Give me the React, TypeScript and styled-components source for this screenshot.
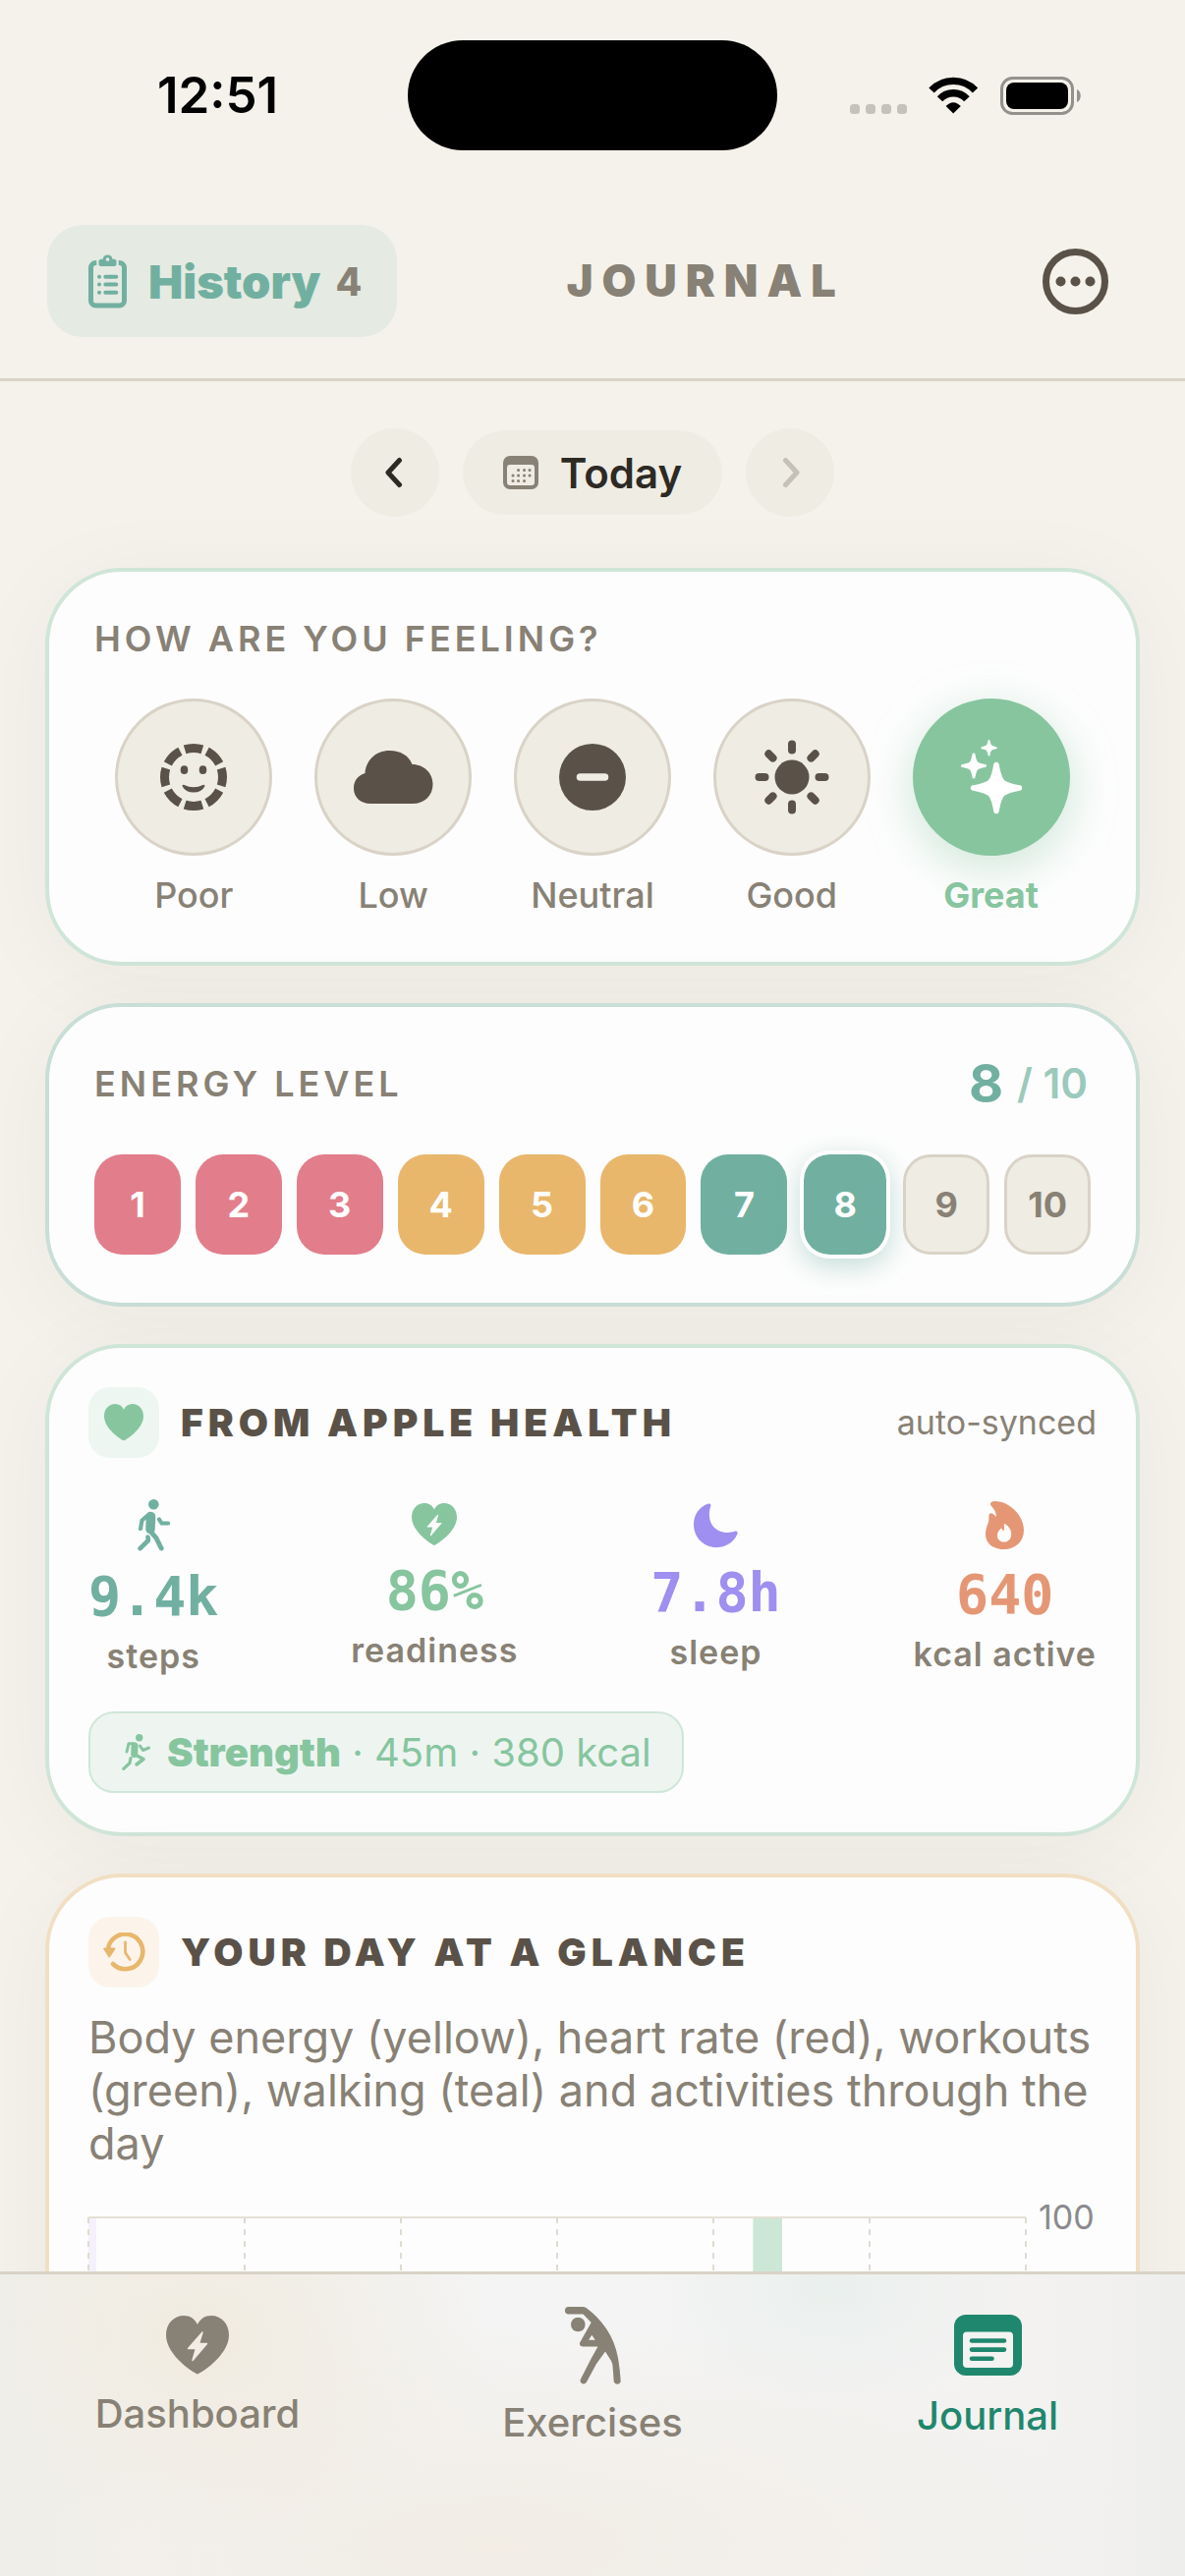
import React, { useState } from "react";
import styled, { createGlobalStyle, css } from "styled-components";

const color = {
  page: "#f5f2eb",
  card: "#fdfdfd",
  line: "#d9d3c7",
  fill: "#efece3",
  ink: "#2d2a24",
  strong: "#5a5248",
  muted: "#888175",
  green: "#87c59f",
  teal: "#71b0a0",
  amber: "#e8b76c",
  rose: "#e27d8b",
  violet: "#9f8ff0",
  orange: "#e59775",
  active: "#1f876d",
};

const GlobalStyle = createGlobalStyle`
  *, *::before, *::after { box-sizing: border-box; }
  body {
    margin: 0;
    background: ${color.page};
    font-family: Inter, "Liberation Sans", sans-serif;
    -webkit-font-smoothing: antialiased;
  }
  button { font: inherit; color: inherit; border: 0; padding: 0; background: none; cursor: pointer; }
  h1, h2, p, dl, dd, dt { margin: 0; font-weight: inherit; }
  svg { display: block; flex: none; }
`;

/* ---------- shell ---------- */

const Screen = styled.div`
  display: flex;
  flex-direction: column;
  height: 100vh;
  background: ${color.page};
`;

const StatusBar = styled.div`
  display: grid;
  grid-template-columns: 1fr 376px 1fr;
  align-items: center;
  padding: 41px 0 34px;
`;

const Clock = styled.time`
  padding-left: 28px;
  text-align: center;
  font-size: 51px;
  line-height: 60px;
  font-weight: 600;
  color: #000;
`;

const Island = styled.div`
  height: 112px;
  border-radius: 56px;
  background: #000;
`;

const StatusIcons = styled.div`
  display: flex;
  justify-content: center;
  align-items: center;
  gap: 22px;
  padding-right: 32px;
`;

const Header = styled.header`
  display: flex;
  align-items: center;
  justify-content: space-between;
  padding: 42px 48px;
  border-bottom: 3px solid ${color.line};
`;

const HistoryButton = styled.button`
  display: flex;
  align-items: center;
  height: 114px;
  padding: 0 36px 0 42px;
  border-radius: 36px;
  background: #e5eae2;
  color: ${color.teal};
  font-size: 47px;
  font-weight: 900;
`;

const HistoryText = styled.span`
  margin-left: 22px;
`;

const HistoryCount = styled.span`
  margin-left: 15px;
  font-size: 39px;
  font-weight: 800;
  color: ${color.muted};
`;

const Title = styled.h1`
  font-size: 45px;
  line-height: 54px;
  font-weight: 900;
  letter-spacing: 9px;
  color: ${color.muted};
`;

const MoreButton = styled.button`
  display: grid;
  place-items: center;
  width: 126px;
  height: 114px;
  color: ${color.strong};
`;

const Scroll = styled.main`
  flex: 1;
  min-height: 0;
  overflow-y: auto;
  scrollbar-width: none;
  padding: 48px 46px;
`;

/* ---------- date switcher ---------- */

const DateNav = styled.nav`
  display: flex;
  justify-content: center;
  align-items: center;
  gap: 24px;
  margin-bottom: 52px;
`;

const RoundButton = styled.button`
  display: grid;
  place-items: center;
  width: 90px;
  height: 90px;
  border-radius: 50%;
  background: #efece4;
  color: ${color.ink};

  &:disabled {
    color: #c5c0b8;
    cursor: default;
  }
`;

const DateButton = styled.button`
  display: flex;
  align-items: center;
  gap: 22px;
  height: 86px;
  padding: 0 41px;
  border-radius: 43px;
  background: #efece4;
  color: ${color.ink};
  font-size: 42px;
  font-weight: 600;
`;

/* ---------- cards ---------- */

const CardList = styled.div`
  display: flex;
  flex-direction: column;
  gap: 38px;
`;

const Card = styled.section<{ $border: string; $pad: string }>`
  padding: ${(p) => p.$pad};
  border: 4px solid ${(p) => p.$border};
  border-radius: 78px;
  background: ${color.card};
  box-shadow: 0 12px 96px rgba(50, 50, 36, 0.045);
`;

const SectionLabel = styled.h2`
  font-size: 36px;
  line-height: 44px;
  font-weight: 600;
  letter-spacing: 4px;
  color: ${color.muted};
`;

const MoodRow = styled.div`
  display: grid;
  grid-template-columns: repeat(5, 1fr);
  margin-top: 39px;
`;

const MoodDisc = styled.span<{ $on: boolean }>`
  display: grid;
  place-items: center;
  width: 160px;
  height: 160px;
  border-radius: 50%;
  border: 3px solid ${color.line};
  background: ${color.fill};
  color: ${color.strong};
  ${(p) =>
    p.$on &&
    css`
      border-color: ${color.green};
      background: ${color.green};
      color: #fff;
      box-shadow: 0 12px 48px rgba(135, 197, 159, 0.4);
    `}
`;

const MoodButton = styled.button<{ $on: boolean }>`
  display: flex;
  flex-direction: column;
  align-items: center;
  gap: 18px;
  font-size: 36px;
  line-height: 44px;
  font-weight: ${(p) => (p.$on ? 700 : 500)};
  color: ${(p) => (p.$on ? color.green : color.muted)};
`;

const EnergyHead = styled.div`
  display: flex;
  align-items: center;
  justify-content: space-between;
  height: 60px;
`;

const EnergyValue = styled.output`
  display: flex;
  align-items: center;
  gap: 14px;
  padding-right: 3px;
  font-size: 54px;
  line-height: 60px;
  font-weight: 700;
  color: ${color.teal};
`;

const EnergyMax = styled.span`
  font-size: 42px;
  font-weight: 600;
  color: #9bc9bc;
`;

const EnergyRow = styled.div`
  display: grid;
  grid-template-columns: repeat(10, 1fr);
  gap: 15px;
  margin-top: 42px;
`;

const EnergyButton = styled.button<{ $fill: string; $state: "off" | "on" | "current" }>`
  height: 102px;
  border-radius: 28px;
  background: ${(p) => p.$fill};
  color: #fff;
  font-size: 36px;
  font-weight: 700;
  ${(p) =>
    p.$state === "off" &&
    css`
      border: 3px solid ${color.line};
      color: ${color.muted};
    `}
  ${(p) =>
    p.$state === "current" &&
    css`
      height: 106px;
      margin: -2px 0;
      border: 2px solid ${color.card};
      background-clip: padding-box;
      box-shadow: 0 0 0 2px ${color.card}, 0 8px 28px 2px rgba(113, 176, 160, 0.4);
    `}
`;

const CardHead = styled.div`
  display: flex;
  align-items: center;
  gap: 22px;
`;

const IconTile = styled.span<{ $tint: string; $ink: string }>`
  display: grid;
  place-items: center;
  width: 72px;
  height: 72px;
  border-radius: 22px;
  background: ${(p) => p.$tint};
  color: ${(p) => p.$ink};
`;

const CardTitle = styled.h2`
  flex: 1;
  font-size: 39px;
  line-height: 48px;
  font-weight: 900;
  letter-spacing: 5px;
  color: ${color.strong};
`;

const SyncNote = styled.span`
  font-size: 34px;
  line-height: 40px;
  color: ${color.muted};
`;

const Stats = styled.dl`
  display: flex;
  align-items: center;
  justify-content: space-between;
  margin-top: 36px;
`;

const Stat = styled.div<{ $ink: string }>`
  display: flex;
  flex-direction: column;
  align-items: center;
  gap: 9px;
  color: ${(p) => p.$ink};
`;

const StatValue = styled.dd`
  font-family: "DejaVu Sans Mono", "Liberation Mono", monospace;
  font-size: 55px;
  line-height: 64px;
  font-weight: 700;
`;

const StatName = styled.dt`
  order: 1;
  font-size: 34px;
  line-height: 40px;
  font-weight: 600;
  letter-spacing: 1px;
  color: ${color.muted};
`;

const StatIcon = styled.span<{ $height: number }>`
  display: grid;
  place-items: center;
  height: ${(p) => p.$height}px;
`;

const WorkoutChip = styled.div`
  display: inline-flex;
  align-items: center;
  gap: 17px;
  height: 83px;
  margin-top: 36px;
  padding: 0 31px 0 32px;
  border: 2px solid #cfe7d9;
  border-radius: 26px;
  background: #eef5f1;
  color: ${color.green};
  font-size: 40px;
  line-height: 48px;

  strong {
    font-weight: 900;
  }
`;

const Note = styled.p`
  margin-top: 24px;
  font-size: 45px;
  line-height: 54px;
  color: ${color.muted};
`;

const ChartRow = styled.div`
  display: flex;
  margin-top: 36px;
`;

const Plot = styled.svg`
  flex: 1;
  min-width: 0;
  height: 240px;
  margin-top: 12px;
  overflow: visible;
`;

const AxisLabel = styled.span`
  width: 72px;
  padding-left: 13px;
  font-size: 34px;
  line-height: 24px;
  color: #8a8a8d;
`;

/* ---------- tab bar ---------- */

const TabBar = styled.nav`
  display: grid;
  grid-template-columns: repeat(3, 1fr);
  align-items: center;
  padding: 30px 0 132px;
  border-top: 3px solid ${color.line};
  background:
    radial-gradient(ellipse 24% 70% at 17% 20%, rgba(240, 234, 220, 0.85), transparent),
    radial-gradient(ellipse 16% 40% at 70% 5%, rgba(232, 239, 236, 0.8), transparent),
    radial-gradient(ellipse 55% 75% at 42% 90%, rgba(241, 236, 227, 0.9), transparent),
    linear-gradient(90deg, #eeeeea, #f3f2f1 12%, #f4f4f4 50%, #f3f2f1 88%, #eeeeec);
`;

const Tab = styled.a<{ $on?: boolean }>`
  display: flex;
  flex-direction: column;
  align-items: center;
  gap: 13px;
  font-size: 40px;
  line-height: 48px;
  font-weight: 500;
  text-decoration: none;
  color: ${(p) => (p.$on ? color.active : color.muted)};
`;

/* ---------- icons ---------- */

const SignalDots = () => (
  <svg width="58" height="38" fill="#c5c2bc">
    {[0, 16, 32, 48].map((x) => (
      <rect key={x} x={x} y="28" width="10" height="10" rx="3.5" />
    ))}
  </svg>
);

const Wifi = () => (
  <svg width="51" height="38" viewBox="0 0 51 38">
    <g fill="none" stroke="#000" strokeWidth="7.4">
      <path d="M3 14A30.6 30.6 0 0 1 47.5 14" />
      <path d="M11.5 22.8A18.6 18.6 0 0 1 39 22.8" />
    </g>
    <path d="M25.2 37.5L17.6 30Q25.2 22.4 32.8 30Z" />
  </svg>
);

const Battery = () => (
  <svg width="82" height="39" viewBox="0 0 82 39">
    <rect x="1.5" y="1.5" width="72" height="36" rx="11" fill="none" stroke="#93918c" strokeWidth="3" />
    <rect x="6" y="6" width="63" height="27" rx="8" />
    <path d="M78 13c5 2 5 11 0 13z" fill="#93918c" />
  </svg>
);

const Clipboard = () => (
  <svg width="39" height="55" viewBox="0 0 39 55" fill="none" stroke="currentColor">
    <path
      strokeWidth="5"
      d="M8.3 8.5H7.500a5 5 0 0 0-5 5V47a5 5 0 0 0 5 5h24a5 5 0 0 0 5-5V13.500a5 5 0 0 0-5-5h-.8"
    />
    <path
      fill="currentColor"
      stroke="none"
      fillRule="evenodd"
      d="M14.700 4.800a4.900 4.900 0 0 1 9.700 0h1.600q2.500 0 2.500 2.500v2.200q0 2.500-2.500 2.500H13q-2.500 0-2.500-2.500V7.300q0-2.500 2.500-2.500zM21.400 5a1.800 1.800 0 1 0-3.700 0 1.800 1.800 0 1 0 3.700 0z"
    />
    <path strokeWidth="4" strokeLinecap="round" d="M17.300 22.800h11M17.300 30.600h11M17.300 38.700h11M11 22.800h.1M11 30.600h.1M11 38.700h.1" />
  </svg>
);

const Ellipsis = () => (
  <svg width="67" height="67" viewBox="0 0 67 67" fill="currentColor">
    <circle cx="33.5" cy="33.5" r="30" fill="none" stroke="currentColor" strokeWidth="7" />
    <circle cx="18.500" cy="33.500" r="5" />
    <circle cx="33.500" cy="33.500" r="5" />
    <circle cx="48.500" cy="33.500" r="5" />
  </svg>
);

const Chevron = ({ dir }: { dir: "left" | "right" }) => (
  <svg width="20" height="32" viewBox="0 0 20 32" fill="none" stroke="currentColor" strokeWidth="5" strokeLinecap="round" strokeLinejoin="round">
    <path d={dir === "left" ? "M14.500 3.500L3 16l11.500 12.500" : "M5.500 3.500L17 16l-11.500 12.500"} />
  </svg>
);

const Calendar = () => (
  <svg width="36" height="34" viewBox="0 0 36 34">
    <rect width="36" height="34" rx="7" fill={color.muted} />
    <rect x="4" y="9" width="28" height="21" rx="3" fill="#efece4" />
    <path
      stroke={color.muted}
      strokeWidth="3"
      strokeLinecap="round"
      d="M15.500 14.500h.1M21.500 14.500h.1M27 14.500h.1M10 20h.1M15.500 20h.1M21.500 20h.1M27 20h.1M10 25.500h.1M15.500 25.500h.1M21.500 25.500h.1"
    />
  </svg>
);

const DashedFace = () => (
  <svg width="68" height="68" viewBox="0 0 68 68" fill="currentColor">
    <circle cx="34" cy="34" r="29.500" fill="none" stroke="currentColor" strokeWidth="9" pathLength={80} strokeDasharray="7.800 2.200" strokeDashoffset="3.900" />
    <ellipse cx="24.500" cy="26.700" rx="3.800" ry="4.400" />
    <ellipse cx="43.500" cy="26.700" rx="3.800" ry="4.400" />
    <path d="M24.500 42q9.500 4.500 19 0 2.500-.8 1.800 1.400-3 6-11.300 6t-11.300-6q-.7-2.200 1.800-1.400z" />
  </svg>
);

const Cloud = () => (
  <svg width="81" height="54" viewBox="0 0 81 54" fill="currentColor">
    <path d="M17 54C7 54 0 47.500 0 38.500 0 30.500 4.500 25 11.500 23 12.500 10 22 0 36.500 0 47.500 0 56 5 59.500 14 71.500 14 80.500 23 80.500 34 80.500 46 72 54 60 54z" />
  </svg>
);

const MinusDisc = () => (
  <svg width="68" height="68" viewBox="0 0 68 68">
    <circle cx="34" cy="34" r="34" fill="currentColor" />
    <path d="M21.500 34h25" stroke={color.fill} strokeWidth="7.500" strokeLinecap="round" />
  </svg>
);

const Sun = () => (
  <svg width="76" height="76" viewBox="-38 -38 76 76" fill="currentColor">
    <circle r="17.500" />
    {[0, 45, 90, 135, 180, 225, 270, 315].map((a) => (
      <rect key={a} x="-4" y="-37.500" width="8" height="14" rx="4" transform={`rotate(${a})`} />
    ))}
  </svg>
);

const spark = (x: number, y: number, r: number) => {
  const k = r * 0.22;
  const j = r * 0.14;
  return (
    `M${x} ${y - r}C${x + j} ${y - k} ${x + k} ${y - j} ${x + r} ${y}` +
    `C${x + k} ${y + j} ${x + j} ${y + k} ${x} ${y + r}` +
    `C${x - j} ${y + k} ${x - k} ${y + j} ${x - r} ${y}` +
    `C${x - k} ${y - j} ${x - j} ${y - k} ${x} ${y - r}Z`
  );
};

const Sparkles = () => (
  <svg width="62" height="76" viewBox="0 0 62 76" fill="currentColor" stroke="currentColor" strokeLinejoin="round">
    <path d={spark(36, 49, 23.5)} strokeWidth="5.5" />
    <path d={spark(13, 26.5, 11.5)} strokeWidth="3" />
    <path d={spark(28.5, 8.2, 7.2)} strokeWidth="2" />
  </svg>
);

const heartPath =
  "M32 59.500C30 59.500 0 41 0 19.800 0 8 8 0 18 0c6.500 0 11.300 3.300 14 9 2.700-5.700 7.500-9 14-9 10 0 18 8 18 19.800C64 41 34 59.500 32 59.500z";

const Heart = ({ width }: { width: number }) => (
  <svg width={width} viewBox="0 0 64 60" fill="currentColor">
    <path d={heartPath} />
  </svg>
);

const HeartBolt = ({ width, bolt }: { width: number; bolt: string }) => (
  <svg width={width} viewBox="0 0 64 60">
    <path d={heartPath} fill="currentColor" />
    <path d="M37 17L22.500 33.500h8L27 45.500 41.500 28.500h-8z" fill={bolt} stroke={bolt} strokeWidth="1.500" strokeLinejoin="round" />
  </svg>
);

const Walker = () => (
  <svg width="33" height="53" viewBox="0 0 33 53" fill="none" stroke="currentColor" strokeLinecap="round" strokeLinejoin="round">
    <circle cx="16.300" cy="5.300" r="5.300" fill="currentColor" stroke="none" />
    <path d="M13.500 17.500L13 30.500" strokeWidth="9.500" />
    <path d="M12 15L4.500 21.500 3 30" strokeWidth="4.200" />
    <path d="M22 20.500l2.500 4H31" strokeWidth="4.200" />
    <path d="M13.500 33L19 39.500 24.200 50" strokeWidth="5" />
    <path d="M10.500 38.500l.3 3.500L2.600 50.200" strokeWidth="4.600" />
  </svg>
);

const Runner = () => (
  <svg width="29" height="37" viewBox="0 0 29 37" fill="none" stroke="currentColor" strokeLinecap="round" strokeLinejoin="round">
    <circle cx="17.700" cy="3.700" r="3.700" fill="currentColor" stroke="none" />
    <path d="M13 12l-.3 8.500" strokeWidth="7" />
    <path d="M12 9.700H7L5 18" strokeWidth="3" />
    <path d="M18.500 12l3 4.500 6-2.500" strokeWidth="3" />
    <path d="M13.500 21l8.500 4.500-7 5.500" strokeWidth="3.600" />
    <path d="M9 24.500l-1 5L1.800 35.300" strokeWidth="3.200" />
  </svg>
);

const Moon = () => (
  <svg width="45" height="45" viewBox="0 0 45 45" fill="currentColor">
    <path d="M14 .8C16.500-.3 18 1 17.300 3 15.800 7 15.500 12 16.500 17 18.500 25 26 30 34 30c3 0 5.500-.5 7.500-1.200 2.500-.8 3.800.7 2.800 2.700C41 39.500 33 45 23.500 45 10 45 0 35 0 21.500 0 12 5.500 4 14 .8z" />
  </svg>
);

const Flame = () => (
  <svg width="39" height="49" viewBox="0 0 39 49" fill="currentColor" fillRule="evenodd">
    <path d="M5.500 4.500C4 2 6 0 9.200 0 16 0 21.500 2.500 26 6c8 6 13 14.500 13 23.500C39 41 30.500 49 18.500 49 8 49 0 43 0 34c0-5 1.300-8.500 2.700-12 .9-2.500.6-5 .8-7.500.2-2.800 2.500-2.800 4.500-1.300l3 2.900C11 11 8.500 8 5.500 4.500zM19 22.700c-.6 3.300.8 5-.8 7.800l-2.200-3.300C14 29.500 12 31.500 12 35.200c0 3.800 3 6.300 7 6.300s7.200-2.800 7.200-8.300c0-4.500-3.200-8.500-7.200-10.500z" />
  </svg>
);

const ClockBack = () => (
  <svg width="43" height="40" viewBox="0 0 43 40" fill="none" stroke="currentColor" strokeLinecap="round" strokeLinejoin="round">
    <path d="M4.900 17A17.800 17.800 0 1 1 10 32" strokeWidth="4.600" />
    <path d="M1.200 16.500h10.300L6.200 24.500z" fill="currentColor" strokeWidth="2" />
    <path d="M22.500 10v10.500l4.700 7" strokeWidth="2.800" />
  </svg>
);

const Stretch = () => (
  <svg width="57" height="79" viewBox="0 0 57 79" fill="currentColor" fillRule="evenodd">
    <circle cx="13.300" cy="18" r="7.300" />
    <path d="M3.500 0H18q2 0 3.500 1C37 12.500 50 29 54 52q2 12 2.700 23.500c0 4.200-6.700 4.200-7 0L48.500 60q-.2-2.500-1.500-5L41 45.500 32 58 22 76.500c-2.200 4-8.200 1-6-3L27 52l6.500-11.500h-15c-3 0-4.500-2.200-3-4.700L26.700 16 18.500 7.500h-15c-4.800 0-4.800-7.500 0-7.500zM27.300 28.700l-3.200 5h6.700z" />
  </svg>
);

const JournalPage = () => (
  <svg width="69" height="62" viewBox="0 0 69 62">
    <rect width="69" height="62" rx="12" fill="currentColor" />
    <rect x="9" y="17.500" width="51" height="36.500" rx="4" fill="#f3f3f2" />
    <path d="M18 26.500h33M18 35.600h33M18 44.800h20.500" stroke="currentColor" strokeWidth="4.600" strokeLinecap="round" />
  </svg>
);

/* ---------- data ---------- */

const moods = [
  { name: "Poor", icon: <DashedFace /> },
  { name: "Low", icon: <Cloud /> },
  { name: "Neutral", icon: <MinusDisc /> },
  { name: "Good", icon: <Sun /> },
  { name: "Great", icon: <Sparkles /> },
];

const stats = [
  { name: "steps", value: "9.4k", ink: color.teal, height: 64, icon: <Walker /> },
  { name: "readiness", value: "86%", ink: color.green, height: 52, icon: <HeartBolt width={46} bolt={color.card} /> },
  { name: "sleep", value: "7.8h", ink: color.violet, height: 56, icon: <Moon /> },
  { name: "kcal active", value: "640", ink: color.orange, height: 60, icon: <Flame /> },
];

const levels = [1, 2, 3, 4, 5, 6, 7, 8, 9, 10];
const levelFill = (n: number) => (n <= 3 ? color.rose : n <= 6 ? color.amber : color.teal);

export default function App() {
  const [mood, setMood] = useState("Great");
  const [energy, setEnergy] = useState(8);

  return (
    <Screen>
      <GlobalStyle />
      <StatusBar>
        <Clock>12:51</Clock>
        <Island />
        <StatusIcons>
          <SignalDots />
          <Wifi />
          <Battery />
        </StatusIcons>
      </StatusBar>

      <Header>
        <HistoryButton>
          <Clipboard />
          <HistoryText>History</HistoryText>
          <HistoryCount>4</HistoryCount>
        </HistoryButton>
        <Title>JOURNAL</Title>
        <MoreButton aria-label="More">
          <Ellipsis />
        </MoreButton>
      </Header>

      <Scroll>
        <DateNav>
          <RoundButton aria-label="Previous day">
            <Chevron dir="left" />
          </RoundButton>
          <DateButton>
            <Calendar />
            Today
          </DateButton>
          <RoundButton aria-label="Next day" disabled>
            <Chevron dir="right" />
          </RoundButton>
        </DateNav>

        <CardList>
          <Card $border="#cfe5d7" $pad="46px">
            <SectionLabel>HOW ARE YOU FEELING?</SectionLabel>
            <MoodRow>
              {moods.map((m) => (
                <MoodButton key={m.name} $on={m.name === mood} aria-pressed={m.name === mood} onClick={() => setMood(m.name)}>
                  <MoodDisc $on={m.name === mood}>{m.icon}</MoodDisc>
                  {m.name}
                </MoodButton>
              ))}
            </MoodRow>
          </Card>

          <Card $border="#c8ded6" $pad="48px 46px 49px">
            <EnergyHead>
              <SectionLabel>ENERGY LEVEL</SectionLabel>
              <EnergyValue>
                {energy}
                <EnergyMax>/ 10</EnergyMax>
              </EnergyValue>
            </EnergyHead>
            <EnergyRow>
              {levels.map((n) => (
                <EnergyButton
                  key={n}
                  $fill={n <= energy ? levelFill(n) : color.fill}
                  $state={n === energy ? "current" : n < energy ? "on" : "off"}
                  aria-pressed={n === energy}
                  onClick={() => setEnergy(n)}
                >
                  {n}
                </EnergyButton>
              ))}
            </EnergyRow>
          </Card>

          <Card $border="#cfe5d7" $pad="40px">
            <CardHead>
              <IconTile $tint="#edf6f1" $ink={color.green}>
                <Heart width={40} />
              </IconTile>
              <CardTitle>FROM APPLE HEALTH</CardTitle>
              <SyncNote>auto-synced</SyncNote>
            </CardHead>
            <Stats>
              {stats.map((s) => (
                <Stat key={s.name} $ink={s.ink}>
                  <StatIcon $height={s.height}>{s.icon}</StatIcon>
                  <StatName>{s.name}</StatName>
                  <StatValue>{s.value}</StatValue>
                </Stat>
              ))}
            </Stats>
            <WorkoutChip>
              <Runner />
              <span>
                <strong>Strength</strong> · 45m · 380 kcal
              </span>
            </WorkoutChip>
          </Card>

          <Card $border="#f1dfc3" $pad="40px">
            <CardHead>
              <IconTile $tint="#fcf4ea" $ink={color.amber}>
                <ClockBack />
              </IconTile>
              <CardTitle>YOUR DAY AT A GLANCE</CardTitle>
            </CardHead>
            <Note>Body energy (yellow), heart rate (red), workouts (green), walking (teal) and activities through the day</Note>
            <ChartRow>
              <Plot aria-label="Day timeline">
                <rect x="0" y="0" width="8" height="100%" fill="#f4f1fc" />
                <rect x="70.900%" y="0" width="3.100%" height="100%" fill="#cde7d6" />
                {[0, 1, 2, 3, 4, 5, 6].map((i) => (
                  <line
                    key={i}
                    x1={`${(i * 100) / 6}%`}
                    x2={`${(i * 100) / 6}%`}
                    y1="0"
                    y2="100%"
                    stroke="#dfdbd0"
                    strokeWidth="2"
                    strokeDasharray="6 6"
                  />
                ))}
                <line x1="0" x2="100%" y1="0" y2="0" stroke="#e5e0d6" strokeWidth="2" />
              </Plot>
              <AxisLabel>100</AxisLabel>
            </ChartRow>
          </Card>
        </CardList>
      </Scroll>

      <TabBar>
        <Tab href="#dashboard">
          <StatIcon $height={66}>
            <HeartBolt width={64} bolt="#f1ede5" />
          </StatIcon>
          Dashboard
        </Tab>
        <Tab href="#exercises">
          <StatIcon $height={84}>
            <Stretch />
          </StatIcon>
          Exercises
        </Tab>
        <Tab href="#journal" $on aria-current="page">
          <StatIcon $height={70}>
            <JournalPage />
          </StatIcon>
          Journal
        </Tab>
      </TabBar>
    </Screen>
  );
}
